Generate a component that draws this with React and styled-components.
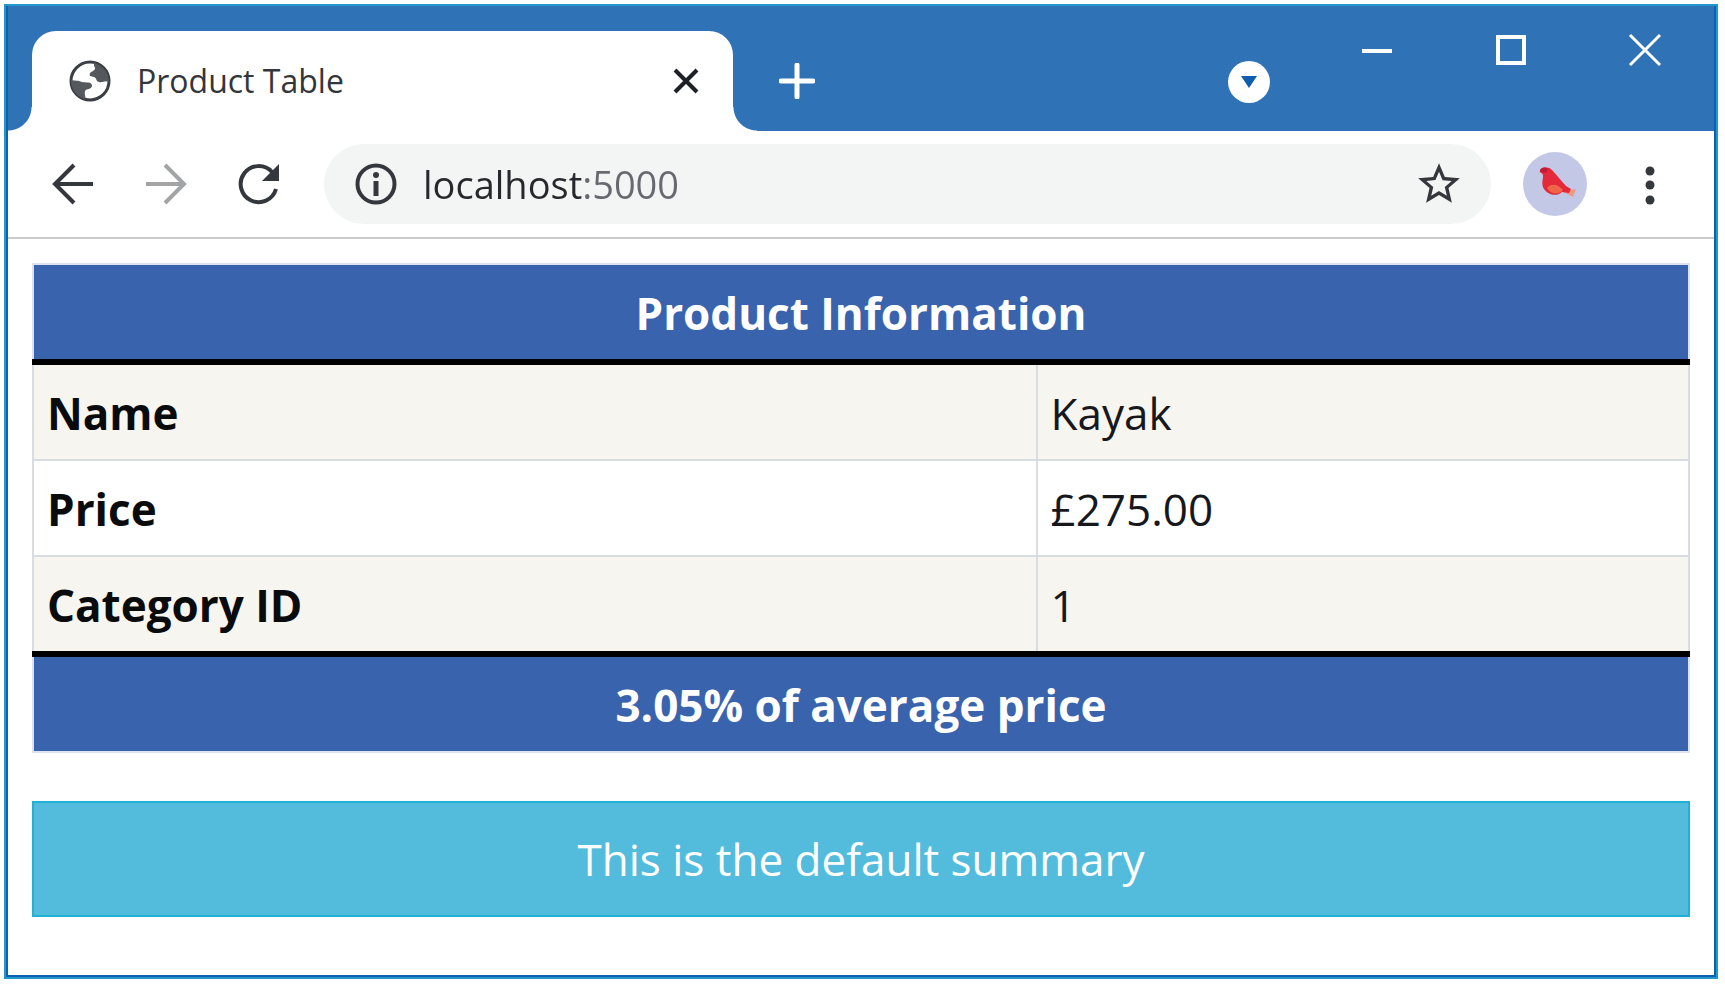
import React from "react";
import styled, { createGlobalStyle } from "styled-components";

const GlobalStyle = createGlobalStyle`
  *, *::before, *::after { box-sizing: border-box; }
  body {
    margin: 0;
    background: #fff;
    color: #16181b;
    font-family: "Open Sans", "Noto Sans", sans-serif;
    font-size: 44px;
    line-height: 66px;
  }
  button {
    display: flex;
    align-items: center;
    justify-content: center;
    margin: 0;
    padding: 0;
    border: 0;
    background: none;
    color: inherit;
    font: inherit;
    cursor: pointer;
  }
  svg { display: block; flex: none; }
`;

const Page = styled.div`
  display: flex;
  min-height: 100vh;
  padding: 4px 7px 8px 4px;
`;

const BrowserWindow = styled.div`
  display: flex;
  flex: 1;
  flex-direction: column;
  min-width: 0;
  padding: 0 2px 2px;
  border: 2px solid #2296cf;
  background: #0d62b0;
`;

const TitleBar = styled.header`
  display: flex;
  height: 125px;
  padding: 0 2px 0 24px;
  background: #3072b6;
  color: #fff;
`;

const Tab = styled.div`
  position: relative;
  display: flex;
  flex: 0 1 701px;
  align-items: center;
  min-width: 0;
  margin-top: 25px;
  padding: 0 25px 0 37px;
  border-radius: 24px 24px 0 0;
  background: #fff;
  color: #33363a;

  &::before,
  &::after {
    content: "";
    position: absolute;
    bottom: 0;
    width: 24px;
    height: 24px;
  }
  &::before {
    right: 100%;
    background: radial-gradient(circle at 0 0, transparent 23px, #fff 24px);
  }
  &::after {
    left: 100%;
    background: radial-gradient(circle at 100% 0, transparent 23px, #fff 24px);
  }
`;

const TabTitle = styled.span`
  flex: 1;
  min-width: 0;
  margin-left: 26px;
  overflow: hidden;
  font-size: 32px;
  line-height: 48px;
  white-space: nowrap;
`;

const TabClose = styled.button`
  width: 44px;
  height: 44px;
  color: #1d2024;
`;

const NewTab = styled.button`
  width: 80px;
  height: 80px;
  margin: 35px auto 0 24px;
`;

const TabSearch = styled.button`
  width: 42px;
  height: 42px;
  margin: 55px 40px 0 0;
  border-radius: 50%;
  background: #fff;
  color: #0f5fae;
`;

const WindowControl = styled.button`
  width: 134px;
  height: 88px;
`;

const Toolbar = styled.nav`
  display: flex;
  align-items: center;
  height: 108px;
  padding: 0 32px 0 18px;
  border-bottom: 2px solid #c9cacb;
  background: #fff;
  color: #34373c;
`;

const NavButton = styled.button`
  width: 93px;
  height: 64px;
  color: ${({ $muted }) => ($muted ? "#a3a4a6" : "inherit")};
`;

const AddressBar = styled.label`
  display: flex;
  flex: 1;
  align-items: center;
  min-width: 0;
  height: 80px;
  margin: 0 32px 0 19px;
  padding: 0 20px 0 31px;
  border-radius: 40px;
  background: #f3f5f5;
`;

const AddressInput = styled.input`
  flex: 1;
  min-width: 0;
  height: 60px;
  margin-left: 26px;
  padding: 0;
  border: 0;
  outline: 0;
  background: linear-gradient(90deg, #26282c 161px, #66696e 161px);
  background-clip: text;
  -webkit-background-clip: text;
  color: #26282c;
  -webkit-text-fill-color: transparent;
  font-family: inherit;
  font-size: 38px;
  line-height: 60px;
`;

const StarButton = styled.button`
  width: 64px;
  height: 64px;
`;

const Avatar = styled.button`
  width: 64px;
  height: 64px;
  margin-right: 31px;
  overflow: hidden;
  border-radius: 50%;
  background: #c3c8e7;
`;

const MenuButton = styled.button`
  width: 64px;
  height: 64px;
`;

const Content = styled.main`
  flex: 1;
  padding: 24px;
  background: #fff;
`;

const ProductTable = styled.table`
  width: 100%;
  border-collapse: collapse;
`;

const LabelColumn = styled.col`
  width: 60.6%;
`;

const Banner = styled.th`
  padding: 15px 14px 13px;
  border: 2px solid #dce2ef;
  ${({ $edge }) => $edge}: 6px solid #000;
  background: #3a63ae;
  color: #fff;
  font-weight: 700;
  text-align: center;
`;

const Row = styled.tr`
  &:nth-child(odd) { background: #f6f5ef; }
`;

const Label = styled.th`
  padding: 15px 13px 13px;
  border: 2px solid #d9dce1;
  color: #0a0b0c;
  font-weight: 700;
  text-align: left;
`;

const Value = styled.td`
  padding: 15px 13px 13px;
  border: 2px solid #d9dce1;
`;

const Summary = styled.div`
  margin-top: 48px;
  padding: 23px;
  border: 2px solid #1fb2d4;
  background: #53bcdd;
  color: #fff;
  text-align: center;
`;

const GlobeIcon = () => (
  <svg width="42" height="42" viewBox="0 0 42 42" fill="none">
    <circle cx="21" cy="21" r="19" stroke="#3b3e43" strokeWidth="3" />
    <path
      d="M25 3C33 5 40 12 40 22C36 20 34 23 30 22C27 22 28 18 25 17L21 16C20 13 22 12 24 11C26 10 27 8 25 6Z"
      fill="#55585c"
    />
    <path
      d="M2 20C6 21 9 20 13 22C17 23 23 21 23 26C22 30 18 28 16 31C15 34 17 36 16 39C8 37 2 30 2 20Z"
      fill="#55585c"
    />
  </svg>
);

const CrossIcon = ({ size, stroke }) => (
  <svg width={size} height={size} viewBox={`0 0 ${size} ${size}`} fill="none">
    <path
      d={`M2 2L${size - 2} ${size - 2}M${size - 2} 2L2 ${size - 2}`}
      stroke="currentColor"
      strokeWidth={stroke}
    />
  </svg>
);

const PlusIcon = () => (
  <svg width="36" height="36" viewBox="0 0 36 36" fill="none">
    <path d="M18 2V34M2 18H34" stroke="currentColor" strokeWidth="5" strokeLinecap="round" />
  </svg>
);

const CaretIcon = () => (
  <svg width="18" height="14" viewBox="0 0 18 14">
    <path d="M1 1H17L9 13Z" fill="currentColor" />
  </svg>
);

const MinimizeIcon = () => (
  <svg width="32" height="32" viewBox="0 0 32 32" fill="none">
    <path d="M1 17H31" stroke="currentColor" strokeWidth="4" />
  </svg>
);

const MaximizeIcon = () => (
  <svg width="32" height="32" viewBox="0 0 32 32" fill="none">
    <rect x="3" y="3" width="26" height="26" stroke="currentColor" strokeWidth="4" />
  </svg>
);

const ArrowIcon = ({ forward }) => (
  <svg width="42" height="42" viewBox="0 0 42 42" fill="none">
    <path
      d={forward ? "M1 21H38M20 2L39 21L20 40" : "M41 21H4M22 2L3 21L22 40"}
      stroke="currentColor"
      strokeWidth="4"
    />
  </svg>
);

const ReloadIcon = () => (
  <svg width="42" height="42" viewBox="0 0 42 42" fill="none">
    <path d="M38 26A18 18 0 1 1 34 9" stroke="currentColor" strokeWidth="4" />
    <path d="M41 1V18H24Z" fill="currentColor" />
  </svg>
);

const InfoIcon = () => (
  <svg width="42" height="42" viewBox="0 0 42 42" fill="none">
    <circle cx="21" cy="21" r="18.5" stroke="currentColor" strokeWidth="4" />
    <circle cx="21" cy="12" r="3" fill="currentColor" />
    <path d="M21 18V33" stroke="currentColor" strokeWidth="5" />
  </svg>
);

const StarIcon = () => (
  <svg width="50" height="50" viewBox="0 0 24 24" fill="currentColor">
    <path d="M22 9.24L14.81 8.62L12 2L9.19 8.63L2 9.24L7.46 13.97L5.82 21L12 17.27L18.18 21L16.55 13.97ZM12 15.4L8.24 17.67L9.24 13.39L5.92 10.51L10.3 10.13L12 6.1L13.71 10.14L18.09 10.52L14.77 13.4L15.77 17.68Z" />
  </svg>
);

const BirdIcon = () => (
  <svg width="64" height="64" viewBox="0 0 64 64">
    <path d="M41 35L46 38L53 37L50 45L40 40Z" fill="#eb9a85" />
    <path
      d="M17 20C16 16 25 13 29 18C34 23 38 29 43 34L48 37L46 41L39 40C34 45 25 43 21 37C18 32 20 28 20 24C20 21 18 21 17 20Z"
      fill="#e4293a"
    />
    <path d="M24 36C28 31 35 32 40 38C37 43 28 43 24 36Z" fill="#f0654a" />
    <path d="M17 20C16 16 22 14 25 17C25 20 22 22 17 20Z" fill="#c41c38" />
  </svg>
);

const DotsIcon = () => (
  <svg width="12" height="42" viewBox="0 0 12 42" fill="currentColor">
    <circle cx="6" cy="8" r="4.5" />
    <circle cx="6" cy="22" r="4.5" />
    <circle cx="6" cy="37" r="4.5" />
  </svg>
);

const products = [
  { label: "Name", value: "Kayak" },
  { label: "Price", value: "£275.00" },
  { label: "Category ID", value: "1" },
];

export default function App() {
  return (
    <>
      <GlobalStyle />
      <Page>
        <BrowserWindow>
          <TitleBar>
            <Tab>
              <GlobeIcon />
              <TabTitle>Product Table</TabTitle>
              <TabClose aria-label="Close tab"><CrossIcon size={26} stroke={4} /></TabClose>
            </Tab>
            <NewTab aria-label="New tab"><PlusIcon /></NewTab>
            <TabSearch aria-label="Search tabs"><CaretIcon /></TabSearch>
            <WindowControl aria-label="Minimize"><MinimizeIcon /></WindowControl>
            <WindowControl aria-label="Maximize"><MaximizeIcon /></WindowControl>
            <WindowControl aria-label="Close"><CrossIcon size={34} stroke={3} /></WindowControl>
          </TitleBar>
          <Toolbar>
            <NavButton aria-label="Back"><ArrowIcon /></NavButton>
            <NavButton aria-label="Forward" $muted><ArrowIcon forward /></NavButton>
            <NavButton aria-label="Reload"><ReloadIcon /></NavButton>
            <AddressBar>
              <InfoIcon />
              <AddressInput aria-label="Address" defaultValue="localhost:5000" spellCheck={false} />
              <StarButton aria-label="Bookmark this page"><StarIcon /></StarButton>
            </AddressBar>
            <Avatar aria-label="Profile"><BirdIcon /></Avatar>
            <MenuButton aria-label="Menu"><DotsIcon /></MenuButton>
          </Toolbar>
          <Content>
            <ProductTable>
              <colgroup>
                <LabelColumn />
                <col />
              </colgroup>
              <thead>
                <tr><Banner colSpan={2} $edge="border-bottom">Product Information</Banner></tr>
              </thead>
              <tbody>
                {products.map(({ label, value }) => (
                  <Row key={label}>
                    <Label scope="row">{label}</Label>
                    <Value>{value}</Value>
                  </Row>
                ))}
              </tbody>
              <tfoot>
                <tr><Banner colSpan={2} $edge="border-top">3.05% of average price</Banner></tr>
              </tfoot>
            </ProductTable>
            <Summary>This is the default summary</Summary>
          </Content>
        </BrowserWindow>
      </Page>
    </>
  );
}
